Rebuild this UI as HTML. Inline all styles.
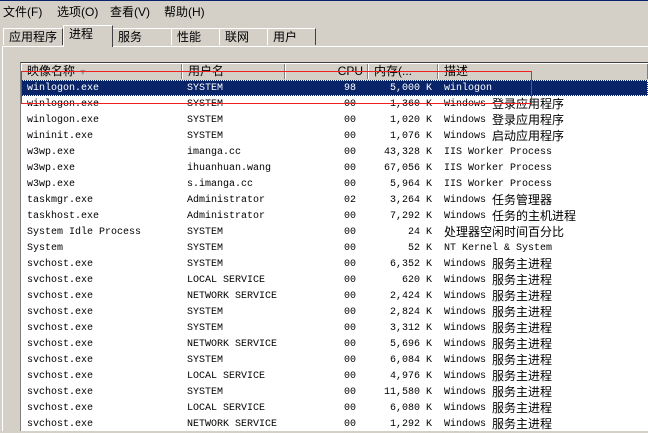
<!DOCTYPE html><html><head><meta charset="utf-8"><style>
body{margin:0;width:648px;height:430px;overflow:hidden;background:#d4d0c8;position:relative;font-family:"Liberation Mono","Noto Sans CJK SC",monospace;font-size:10px;color:#000}
.a{position:absolute;white-space:nowrap}
#top{left:0;top:0;width:648px;height:1px;background:#0a246a}
.m{top:3px;font-size:12px;font-family:"Liberation Sans","Noto Sans CJK SC",sans-serif}
.tab{top:28px;height:17px;border:1px solid #fff;border-right:1px solid #404040;border-bottom:none;font-size:12px;font-family:"Liberation Sans","Noto Sans CJK SC",sans-serif;padding-left:5px;box-sizing:border-box;line-height:16px}
#panel{left:2px;top:46px;width:646px;height:384px;border-left:1px solid #fff;border-top:1px solid #fff}
#list{left:20px;top:62px;width:628px;height:368px;background:#fff;border-left:1px solid #808080;border-top:1px solid #404040}
#hdr{left:21px;top:64px;width:627px;height:16px;background:#d4d0c8}
.h{top:64px;height:15px;border-right:1px solid #808080;border-left:1px solid #fff;box-sizing:border-box;font-size:12px;font-family:"Liberation Sans","Noto Sans CJK SC",sans-serif;line-height:14px;padding-left:5px}
.r{position:absolute;left:21px;width:627px;height:16px}
.r span{position:absolute;white-space:nowrap;top:0;height:16px;line-height:17px}
.sel{background:#0a246a;color:#fff;outline:1px dotted #ffd;outline-offset:-1px}
.r b{font-weight:normal;font-size:12px;font-family:"Noto Sans CJK SC",sans-serif;display:inline-block;vertical-align:top;line-height:15px;height:16px}
</style></head><body>
<div class="a" id="top"></div>
<div class="a m" style="left:3px">文件(F)</div>
<div class="a m" style="left:57px">选项(O)</div>
<div class="a m" style="left:110px">查看(V)</div>
<div class="a m" style="left:164px">帮助(H)</div>
<div class="a" id="panel"></div>
<div class="a tab" style="left:3px;width:60px">应用程序</div>
<div class="a tab" style="left:63px;top:25px;height:22px;width:50px;background:#d4d0c8;z-index:2">进程</div>
<div class="a tab" style="left:112px;width:60px">服务</div>
<div class="a tab" style="left:171px;width:49px">性能</div>
<div class="a tab" style="left:219px;width:49px">联网</div>
<div class="a tab" style="left:267px;width:49px">用户</div>
<div class="a" id="list"></div>
<div class="a" id="hdr"></div>
<div class="a h" style="left:21px;width:161px">映像名称 <span style="color:#999;font-size:9px">▼</span></div>
<div class="a h" style="left:182px;width:103px">用户名</div>
<div class="a h" style="left:285px;width:83px;text-align:right;padding-right:4px">CPU</div>
<div class="a h" style="left:368px;width:70px">内存(...</div>
<div class="a h" style="left:438px;width:210px">描述</div>
<div id="rows"></div>
<div class="a" style="left:21px;top:71px;width:509px;height:31px;border:1px solid #f02020;z-index:5"></div>
<script>
var d=[["winlogon.exe","SYSTEM","98","5,000 K","winlogon"],
["winlogon.exe","SYSTEM","00","1,360 K","Windows |登录应用程序"],
["winlogon.exe","SYSTEM","00","1,020 K","Windows |登录应用程序"],
["wininit.exe","SYSTEM","00","1,076 K","Windows |启动应用程序"],
["w3wp.exe","imanga.cc","00","43,328 K","IIS Worker Process"],
["w3wp.exe","ihuanhuan.wang","00","67,056 K","IIS Worker Process"],
["w3wp.exe","s.imanga.cc","00","5,964 K","IIS Worker Process"],
["taskmgr.exe","Administrator","02","3,264 K","Windows |任务管理器"],
["taskhost.exe","Administrator","00","7,292 K","Windows |任务的主机进程"],
["System Idle Process","SYSTEM","00","24 K","|处理器空闲时间百分比"],
["System","SYSTEM","00","52 K","NT Kernel & System"]];
var s=[["SYSTEM","6,352"],["LOCAL SERVICE","620"],["NETWORK SERVICE","2,424"],["SYSTEM","2,824"],["SYSTEM","3,312"],["NETWORK SERVICE","5,696"],["SYSTEM","6,084"],["LOCAL SERVICE","4,976"],["SYSTEM","11,580"],["LOCAL SERVICE","6,080"],["NETWORK SERVICE","1,292"]];
s.forEach(function(x){d.push(["svchost.exe",x[0],"00",x[1]+" K","Windows |服务主进程"])});
var h="";
d.forEach(function(r,i){
 var desc=r[4].split("|");var ds=desc[0].replace(/&/g,"&amp;").replace(/ /g,"&nbsp;")+(desc.length>1?'<b>'+desc[1]+'</b>':'');
 h+='<div class="r'+(i==0?' sel':'')+'" style="top:'+(80+i*16)+'px"><span style="left:6px">'+r[0]+'</span><span style="left:166px">'+r[1]+'</span><span style="left:323px">'+r[2]+'</span><span style="right:216px">'+r[3]+'</span><span style="left:423px">'+ds+'</span></div>';
});
document.getElementById("rows").innerHTML=h;
</script>
</body></html>
